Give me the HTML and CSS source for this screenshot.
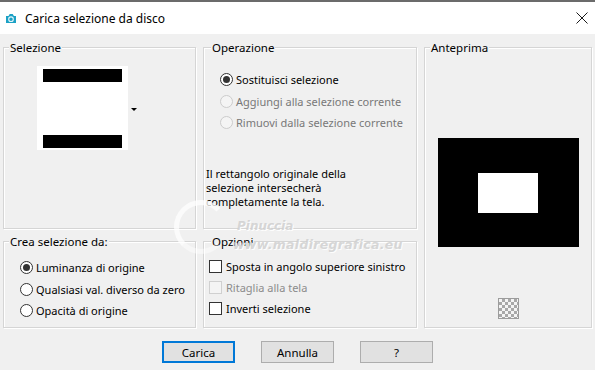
FILE: index.html
```html
<!DOCTYPE html>
<html lang="it">
<head>
  <meta charset="UTF-8" />
  <title>Carica selezione da disco</title>
  <link rel="stylesheet" href="styles.css">
</head>
<body>
  <div class="window">
    <div class="titlebar">
      <svg class="app-icon" width="12" height="11" viewBox="0 0 12 11">
        <path d="M1 3 h2.5 l1.2 -2 h3 l1.2 2 h2.1 v7 h-10 z" fill="#1ba1c5"/>
        <circle cx="6" cy="6.2" r="2.3" fill="none" stroke="#e8f6fa" stroke-width="1.1"/>
      </svg>
      <span class="title">Carica selezione da disco</span>
      <svg class="close" width="12" height="12" viewBox="0 0 12 12">
        <path d="M0.5 0.5 L11.5 11.5 M11.5 0.5 L0.5 11.5" stroke="#1a1a1a" stroke-width="1"/>
      </svg>
    </div>

    <div class="panels">
      <fieldset class="group sel">
        <legend>Selezione</legend>
        <div class="sel-body">
          <div class="thumb">
            <div class="bar"></div>
            <div class="bar"></div>
          </div>
          <span class="drop"></span>
        </div>
      </fieldset>

      <fieldset class="group op">
        <legend>Operazione</legend>
        <div class="radio-list op-list">
          <label class="radio checked"><span class="dot"></span>Sostituisci selezione</label>
          <label class="radio disabled"><span class="dot"></span>Aggiungi alla selezione corrente</label>
          <label class="radio disabled"><span class="dot"></span>Rimuovi dalla selezione corrente</label>
        </div>
        <p class="note">Il rettangolo originale della<br>selezione intersecherà<br>completamente la tela.</p>
      </fieldset>

      <fieldset class="group prev">
        <legend>Anteprima</legend>
        <div class="preview">
          <div class="hole"></div>
        </div>
        <div class="checker"></div>
      </fieldset>

      <fieldset class="group crea">
        <legend>Crea selezione da:</legend>
        <div class="radio-list">
          <label class="radio checked"><span class="dot"></span>Luminanza di origine</label>
          <label class="radio"><span class="dot"></span>Qualsiasi val. diverso da zero</label>
          <label class="radio"><span class="dot"></span>Opacità di origine</label>
        </div>
      </fieldset>

      <fieldset class="group opts">
        <legend>Opzioni</legend>
        <div class="check-list">
          <label class="check"><span class="box"></span>Sposta in angolo superiore sinistro</label>
          <label class="check disabled"><span class="box"></span>Ritaglia alla tela</label>
          <label class="check"><span class="box"></span>Inverti selezione</label>
        </div>
      </fieldset>
    </div>

    <div class="buttons">
      <button class="btn default">Carica</button>
      <button class="btn">Annulla</button>
      <button class="btn">?</button>
    </div>

    <div class="watermark">
      <span class="wm-logo"></span>
      <span class="wm-name">Pinuccia</span>
      <span class="wm-site">www.maldiregrafica.eu</span>
    </div>
  </div>
</body>
</html>
```

FILE: styles.css
```css
body {
  margin: 0;
  font-family: 'Noto Sans', 'Open Sans', sans-serif;
  font-size: 11px;
  color: #000;
  background: #f0f0f0;
}

.window {
  position: relative;
  width: 595px;
  height: 370px;
  background: #f0f0f0;
  overflow: hidden;
}

.titlebar {
  height: 32px;
  border-top: 2px solid #6b6b6b;
  background: #fff;
  display: flex;
  align-items: center;
  padding: 0 7px 0 5px;
}

.app-icon {
  margin-right: 8px;
}

.title {
  flex: 1;
  font-size: 12px;
}

.panels {
  display: grid;
  grid-template-columns: 193px 214px 168px;
  grid-template-rows: 189px 94px;
  column-gap: 7px;
  row-gap: 5px;
  padding: 6px 0 0 3px;
}

.group {
  margin: 0;
  padding: 0;
  min-width: 0;
  border: 1px solid #d5d5d5;
  box-shadow: inset 1px 1px 0 #fff, 1px 1px 0 #fff;
}

.group legend {
  padding: 0 1px;
  margin-left: 5px;
  line-height: 15px;
  font-size: 11.5px;
  background: #f0f0f0;
}

.sel { grid-column: 1; grid-row: 1; }
.op { grid-column: 2; grid-row: 1; }
.prev { grid-column: 3; grid-row: 1 / span 2; }
.crea { grid-column: 1; grid-row: 2; }
.opts { grid-column: 2; grid-row: 2; }

.op legend, .opts legend {
  margin-left: 7px;
}

.sel-body {
  display: flex;
  align-items: center;
  padding: 11px 0 0 33px;
}

.thumb {
  width: 91px;
  height: 84px;
  background: #fff;
  display: flex;
  flex-direction: column;
  justify-content: space-between;
  align-items: center;
  padding: 3px 0 2px;
  box-sizing: border-box;
}

.thumb .bar {
  width: 79px;
  height: 13px;
  background: #000;
}

.drop {
  width: 0;
  height: 0;
  margin: 2px 0 0 3px;
  border-left: 3px solid transparent;
  border-right: 3px solid transparent;
  border-top: 3px solid #000;
}

.radio-list, .check-list {
  display: flex;
  flex-direction: column;
}

.radio, .check {
  display: flex;
  align-items: center;
  height: 21px;
  white-space: nowrap;
}

.radio .dot {
  width: 11px;
  height: 11px;
  border: 1px solid #333;
  border-radius: 50%;
  background: #fff;
  margin-right: 3px;
  display: flex;
  align-items: center;
  justify-content: center;
}

.radio.checked .dot::after {
  content: "";
  width: 7px;
  height: 7px;
  border-radius: 50%;
  background: #333;
}

.radio.disabled {
  color: #787878;
}

.radio.disabled .dot {
  border-color: #cccccc;
  background: #f4f4f4;
}

.op-list {
  padding: 14px 0 0 16px;
}

.op-list .radio {
  height: 21.5px;
}

.note {
  margin: 33px 0 0 2px;
  line-height: 14px;
}

.prev {
  display: flex;
  flex-direction: column;
  align-items: center;
}

.preview {
  width: 141px;
  height: 109px;
  background: #000;
  margin-top: 83px;
  display: flex;
  align-items: center;
  justify-content: center;
}

.hole {
  width: 60px;
  height: 40px;
  background: #fff;
}

.checker {
  width: 19px;
  height: 19px;
  margin-top: 51px;
  border: 1px solid #9c9c9c;
  background: repeating-conic-gradient(#a8a8a8 0 25%, #f4f4f4 0 50%) 0 0 / 6px 6px;
}

.crea .radio-list {
  padding: 8px 0 0 16px;
}

.crea .radio {
  height: 21.5px;
}

.check-list {
  padding: 7px 0 0 5px;
}

.check .box {
  width: 11px;
  height: 11px;
  border: 1px solid #333;
  background: #fff;
  margin-right: 4px;
}

.check.disabled {
  color: #8c8c8c;
}

.check.disabled .box {
  border-color: #d0d0d0;
  background: #f4f4f4;
}

.buttons {
  display: flex;
  justify-content: center;
  gap: 26px;
  margin-top: 13px;
}

.btn {
  width: 73px;
  height: 22px;
  font-family: inherit;
  font-size: 11.5px;
  background: #e1e1e1;
  border: 1px solid #adadad;
  padding: 0;
  color: #000;
}

.btn.default {
  border: 2px solid #0078d7;
}

.watermark {
  position: absolute;
  left: 170px;
  top: 198px;
  width: 230px;
  height: 60px;
  pointer-events: none;
}

.wm-logo {
  position: absolute;
  left: 4px;
  top: 2px;
  width: 44px;
  height: 44px;
  border: 5px solid rgba(255, 255, 255, 0.75);
  border-right-color: transparent;
  border-bottom-color: rgba(255, 255, 255, 0.45);
  border-radius: 50%;
}

.wm-name, .wm-site {
  position: absolute;
  font-family: 'DejaVu Sans', sans-serif;
  font-weight: bold;
  font-style: italic;
  color: rgba(205, 205, 205, 0.8);
  text-shadow: 1px 1px 0 rgba(255, 255, 255, 0.9);
}

.wm-name {
  left: 67px;
  top: 21px;
  font-size: 12px;
}

.wm-site {
  left: 63px;
  top: 39px;
  font-size: 12.5px;
  letter-spacing: 0.3px;
}
```
